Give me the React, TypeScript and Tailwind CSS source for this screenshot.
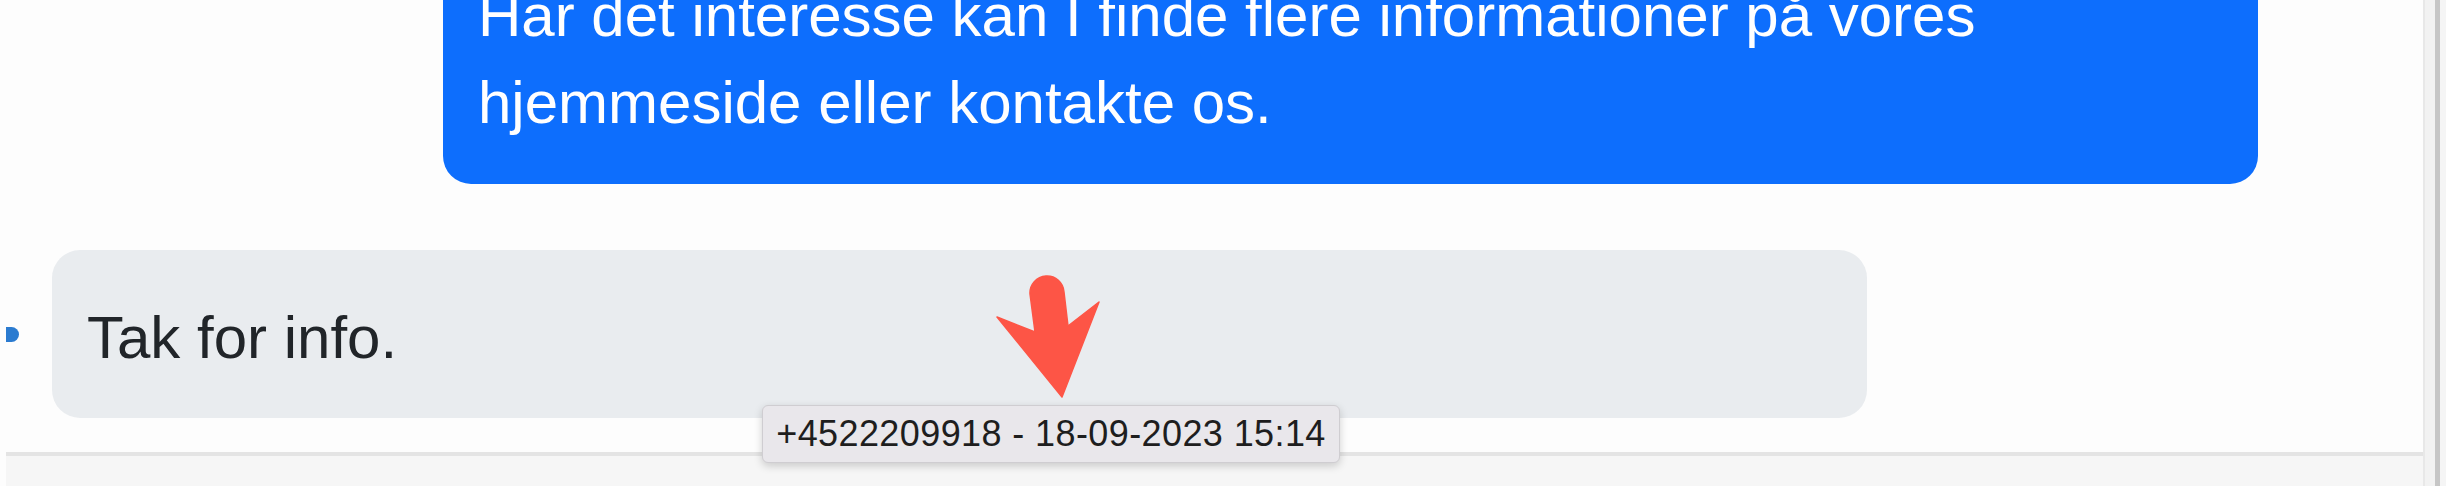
import React from "react";

export default function App() {
  return (
    <div
      className="relative flex h-[486px] w-[2446px] overflow-hidden bg-white"
      style={{ fontFamily: '"Liberation Sans", Arial, Helvetica, sans-serif' }}
    >
      {/* Main chat panel */}
      <div className="flex h-full w-[2425px] flex-col border-r-2 border-[#e8e8e8] bg-[#fdfdfd]">
        {/* Messages */}
        <div className="relative flex h-[452px] flex-col justify-end gap-[66px] overflow-hidden pb-[34px] pl-[52px] pr-[165px]">
          <div className="ml-auto w-[1815px] rounded-[28px] bg-[#0d6efd] px-[35px] py-[38px] text-[60px] leading-[87px] text-white">
            Har det interesse kan I finde flere informationer på vores
            <br />
            hjemmeside eller kontakte os.
          </div>
          <div className="relative w-[1815px] rounded-[28px] bg-[#e9ecef] px-[35px] pb-[37px] pt-[44px] text-[60px] leading-[87px] text-[#212529]">
            Tak for info.
            <span className="absolute left-[-46px] top-[77px] h-[15px] w-[13px] rounded-r-full bg-[#2b7bd0]" />
          </div>
        </div>
        {/* Bottom input area */}
        <div className="ml-[6px] flex-1 border-t-4 border-[#e4e4e4] bg-[#f6f6f6]" />
      </div>
      {/* Window edge */}
      <div className="h-full w-[10px] bg-[#f2f2f2]" />
      <div className="h-full w-[5px] bg-[#c6c6c6]" />
      <div className="h-full w-[6px] bg-[#f5f5f5]" />

      {/* Red annotation arrow */}
      <svg
        className="absolute left-[990px] top-[270px]"
        width="120"
        height="135"
        viewBox="0 0 120 135"
      >
        <path
          d="M72 127 L7 47 L45 62 L40 24 A17 17 0 0 1 74 22 L78 56 L109 32 Z"
          fill="#fd5546"
          stroke="#fd5546"
          strokeWidth="1.5"
          strokeLinejoin="round"
        />
      </svg>

      {/* Tooltip */}
      <div className="absolute left-[762px] top-[405px] flex h-[58px] w-[578px] items-center justify-center whitespace-nowrap rounded-[6px] border border-[#cfcdd1] bg-[#e9e7eb] text-[36px] leading-none tracking-[0.4px] text-[#1e1e1e] shadow-[0_3px_8px_rgba(0,0,0,0.18)]">
        +4522209918 - 18-09-2023 15:14
      </div>
    </div>
  );
}
